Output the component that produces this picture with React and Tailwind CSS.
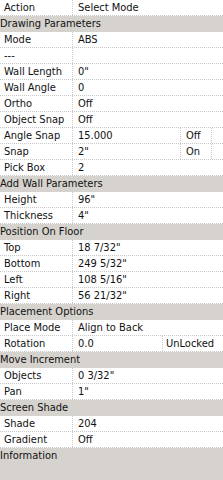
import React from "react";

const rows = [
  { t: "r", a: "Action", b: "Select Mode" },
  { t: "h", a: "Drawing Parameters" },
  { t: "r", a: "Mode", b: "ABS" },
  { t: "r", a: "---", b: "" },
  { t: "r", a: "Wall Length", b: "0\"" },
  { t: "r", a: "Wall Angle", b: "0" },
  { t: "r", a: "Ortho", b: "Off" },
  { t: "r", a: "Object Snap", b: "Off" },
  { t: "r3", a: "Angle Snap", b: "15.000", c: "Off" },
  { t: "r3", a: "Snap", b: "2\"", c: "On" },
  { t: "r", a: "Pick Box", b: "2" },
  { t: "h", a: "Add Wall Parameters" },
  { t: "r", a: "Height", b: "96\"" },
  { t: "r", a: "Thickness", b: "4\"" },
  { t: "h", a: "Position On Floor" },
  { t: "r", a: "Top", b: "18 7/32\"" },
  { t: "r", a: "Bottom", b: "249 5/32\"" },
  { t: "r", a: "Left", b: "108 5/16\"" },
  { t: "r", a: "Right", b: "56 21/32\"" },
  { t: "h", a: "Placement Options" },
  { t: "r", a: "Place Mode", b: "Align to Back" },
  { t: "r3w", a: "Rotation", b: "0.0", c: "UnLocked" },
  { t: "h", a: "Move Increment" },
  { t: "r", a: "Objects", b: "0 3/32\"" },
  { t: "r", a: "Pan", b: "1\"" },
  { t: "h", a: "Screen Shade" },
  { t: "r", a: "Shade", b: "204" },
  { t: "r", a: "Gradient", b: "Off" },
  { t: "h", a: "Information" },
];

export default function App() {
  return (
    <div
      className="w-[223px] h-[480px] bg-[#d6d3ce] text-[11px] leading-[16px] text-[#111] overflow-hidden"
      style={{ fontFamily: '"DejaVu Sans Condensed", "Liberation Sans", Arial, sans-serif' }}
    >
      {rows.map((r, i) => {
        if (r.t === "h") {
          return (
            <div key={i} className="h-[16px] bg-[#d6d3ce] whitespace-nowrap">
              {r.a}
            </div>
          );
        }
        return (
          <div
            key={i}
            className="flex h-[16px] bg-white border-b border-dotted border-[#c8c8c8]"
          >
            <div className="w-[73px] shrink-0 pl-[4px] border-r border-dotted border-[#c8c8c8] whitespace-nowrap overflow-hidden">
              {r.a}
            </div>
            {r.t === "r" && (
              <div className="flex-1 pl-[5px] whitespace-nowrap">{r.b}</div>
            )}
            {r.t === "r3" && (
              <>
                <div className="w-[108px] shrink-0 pl-[5px] border-r border-dotted border-[#c8c8c8] whitespace-nowrap">
                  {r.b}
                </div>
                <div className="w-[31px] shrink-0 pl-[5px] border-r border-dotted border-[#c8c8c8] whitespace-nowrap">
                  {r.c}
                </div>
                <div className="flex-1" />
              </>
            )}
            {r.t === "r3w" && (
              <>
                <div className="w-[90px] shrink-0 pl-[5px] border-r border-dotted border-[#c8c8c8] whitespace-nowrap">
                  {r.b}
                </div>
                <div className="flex-1 pl-[3px] whitespace-nowrap">{r.c}</div>
              </>
            )}
          </div>
        );
      })}
    </div>
  );
}
